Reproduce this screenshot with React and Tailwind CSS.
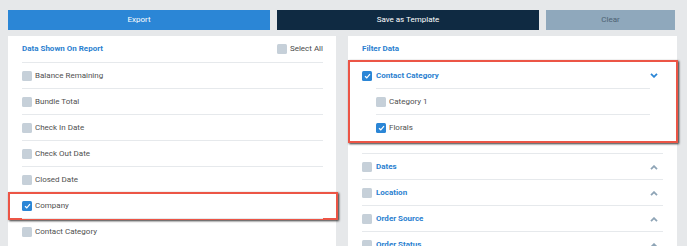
const leftRows = [
	{ label: 'Balance Remaining' },
	{ label: 'Bundle Total' },
	{ label: 'Check In Date' },
	{ label: 'Check Out Date' },
	{ label: 'Closed Date' },
	{ label: 'Company', checked: true, marked: true },
	{ label: 'Contact Category' },
];

const filters = ['Dates', 'Location', 'Order Source', 'Order Status'];

function Box({ checked }) {
	return checked ? (
		<span className="w-[10px] h-[10px] rounded-[1.5px] bg-[#2b86d6] flex items-center justify-center flex-shrink-0">
			<svg width="7" height="6" viewBox="0 0 7 6">
				<path d="M1 3.2 L2.8 4.8 L6 1.2" fill="none" stroke="#fff" strokeWidth="1.2" />
			</svg>
		</span>
	) : (
		<span className="w-[10px] h-[10px] rounded-[1.5px] bg-[#c6d0d9] flex-shrink-0" />
	);
}

function Chevron({ up }) {
	return (
		<svg width="8" height="5" viewBox="0 0 8 5" className="flex-shrink-0">
			<path
				d={up ? 'M1 4.2 L4 1.2 L7 4.2' : 'M1 0.8 L4 3.8 L7 0.8'}
				fill="none"
				stroke={up ? '#8ea4b6' : '#2b86d6'}
				strokeWidth="1.8"
			/>
		</svg>
	);
}

function RedMark({ className }) {
	return (
		<div
			className={
				'absolute border-2 border-[#ec5546] shadow-[1px_1px_2px_rgba(0,0,0,0.8)] pointer-events-none ' +
				className
			}
		/>
	);
}

export default function App() {
	return (
		<div
			className="w-[687px] h-[246px] overflow-hidden bg-[#e6e8ea] pt-[10px] pl-[8px] pr-[10px] text-[8px]"
			style={{ fontFamily: 'Roboto, "Liberation Sans", sans-serif' }}
		>
			<div className="flex gap-[7px] h-[20px]">
				<button className="w-[262px] bg-[#2b86d6] text-white">Export</button>
				<button className="w-[262px] bg-[#0f2a42] text-white">Save as Template</button>
				<button className="w-[129px] bg-[#8fa8bc] text-[#4e6273]">Clear</button>
			</div>

			<div className="flex gap-[12px] mt-[6px]">
				<div className="w-[328px] h-[220px] bg-white pl-[14px] pr-[13px]">
					<div className="h-[26px] flex items-center justify-between">
						<span className="font-bold text-[#2b7fd0]">Data Shown On Report</span>
						<span className="flex items-center gap-[3px] text-[#4a4a4a]">
							<Box />
							Select All
						</span>
					</div>
					{leftRows.map((r) => (
						<div key={r.label} className="relative h-[26px] border-t border-[#e6e9ec] flex items-center gap-[3px] pt-[1px] text-[#505050]">
							<Box checked={r.checked} />
							{r.label}
							{r.marked && <RedMark className="left-[-14px] right-[-15px] top-[-1px] h-[28px]" />}
						</div>
					))}
				</div>

				<div className="w-[329px] h-[220px] bg-white pl-[14px] pr-[14px]">
					<div className="h-[26px] flex items-center">
						<span className="font-bold text-[#2b7fd0]">Filter Data</span>
					</div>
					<div className="relative pb-[13px]">
						<div className="h-[26px] flex items-center justify-between pr-[5px] pt-[1px]">
							<span className="flex items-center gap-[4px] font-bold text-[#2b7fd0]">
								<Box checked />
								Contact Category
							</span>
							<Chevron />
						</div>
						<div className="ml-[14px] mr-[13px]">
							<div className="h-[26px] border-t border-[#e6e9ec] flex items-center gap-[3px] pt-[1px] text-[#505050]">
								<Box />
								Category 1
							</div>
							<div className="h-[26px] border-t border-[#e6e9ec] flex items-center gap-[3px] pt-[1px] text-[#505050]">
								<Box checked />
								Florals
							</div>
						</div>
						<RedMark className="left-[-14px] right-[-15px] top-[-2px] bottom-[10px]" />
					</div>
					{filters.map((f) => (
						<div key={f} className="h-[26px] border-t border-[#e6e9ec] flex items-center justify-between pr-[5px] pt-[1px]">
							<span className="flex items-center gap-[4px] font-bold text-[#2b7fd0]">
								<Box />
								{f}
							</span>
							<Chevron up />
						</div>
					))}
				</div>
			</div>
		</div>
	);
}
